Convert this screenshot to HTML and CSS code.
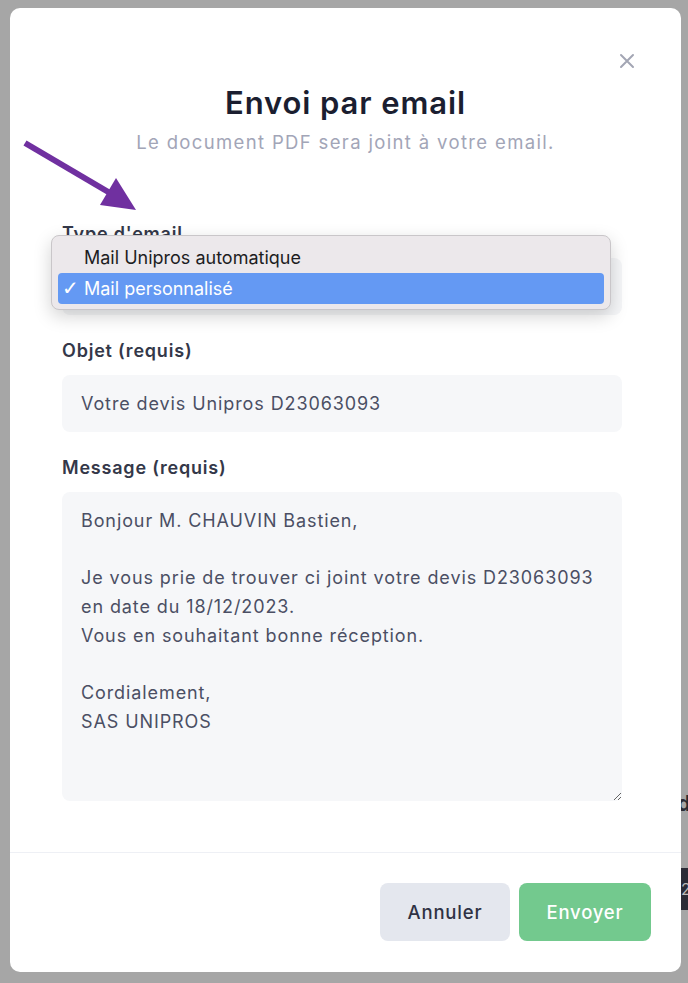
FILE: index.html
```html
<!DOCTYPE html>
<html lang="fr">
<head>
<meta charset="utf-8">
<title>Envoi par email</title>
<link rel="stylesheet" href="styles.css">
</head>
<body>
<div class="backdrop-edge"><span class="edge-d">d</span><span class="edge-block">2</span></div>
<div class="modal">
  <button class="close" aria-label="Fermer">
    <svg width="16" height="16" viewBox="0 0 16 16"><path d="M2 2 L14 14 M14 2 L2 14" stroke="#a3a6b4" stroke-width="2" stroke-linecap="round" fill="none"/></svg>
  </button>
  <header class="head">
    <h1 class="title">Envoi par email</h1>
    <p class="subtitle">Le document PDF sera joint à votre email.</p>
  </header>
  <div class="body">
    <div class="field">
      <label class="label">Type d'email</label>
      <div class="select"></div>
    </div>
    <div class="field">
      <label class="label">Objet (requis)</label>
      <div class="input">Votre devis Unipros D23063093</div>
    </div>
    <div class="field">
      <label class="label">Message (requis)</label>
      <textarea class="textarea">Bonjour M. CHAUVIN Bastien,

Je vous prie de trouver ci joint votre devis D23063093
en date du 18/12/2023.
Vous en souhaitant bonne réception.

Cordialement,
SAS UNIPROS</textarea>
    </div>
  </div>
  <footer class="foot">
    <button class="btn btn-cancel">Annuler</button>
    <button class="btn btn-send">Envoyer</button>
  </footer>
</div>

<div class="menu">
  <div class="menu-item">Mail Unipros automatique</div>
  <div class="menu-item menu-item-active"><span class="check">✓</span>Mail personnalisé</div>
</div>

<svg class="arrow" width="688" height="983" viewBox="0 0 688 983">
  <line x1="25" y1="143" x2="110" y2="193" stroke="#7030a0" stroke-width="6"/>
  <polygon points="136,210 100,205 116,178" fill="#7030a0"/>
</svg>
</body>
</html>
```

FILE: styles.css
```css
* { box-sizing: border-box; }
html, body { margin: 0; padding: 0; }
body {
  width: 688px;
  height: 983px;
  overflow: hidden;
  background: #a6a6a6;
  font-family: "Inter", "Noto Sans", sans-serif;
  position: relative;
  padding: 8px 7px 11px 10px;
}
.backdrop-edge { position: absolute; right: 0; top: 0; width: 7px; height: 983px; }
.edge-d { position: absolute; left: -4px; top: 790px; font: 700 22px "Inter", sans-serif; color: #2b2b33; }
.edge-block { position: absolute; left: 0; top: 868px; width: 7px; height: 42px; background: #2a2b36; color: #bbb; font: 16px "Inter", sans-serif; line-height: 42px; overflow: hidden; }

.modal {
  position: relative;
  width: 671px;
  height: 964px;
  background: #fff;
  border-radius: 10px;
  display: flex;
  flex-direction: column;
}
.close {
  position: absolute;
  top: 45px;
  left: 609px;
  border: 0;
  background: none;
  padding: 0;
  width: 16px;
  height: 16px;
}
.head {
  padding-top: 75px;
  text-align: center;
}
.title {
  margin: 0;
  font-size: 31px;
  line-height: 40px;
  font-weight: 600;
  color: #1b1e30;
  letter-spacing: 0.9px;
}
.subtitle {
  margin: 6px 0 0;
  font-size: 18.5px;
  line-height: 26px;
  color: #a2a5b7;
  letter-spacing: 1.35px;
}
.body {
  flex: 1;
  padding: 67px 59px 0 52px;
  display: flex;
  flex-direction: column;
  gap: 24px;
}
.field { display: flex; flex-direction: column; gap: 12px; }
.label {
  font-size: 18px;
  line-height: 24px;
  font-weight: 600;
  color: #343849;
  letter-spacing: 0.8px;
}
.select {
  height: 57px;
  background: #f5f6f8;
  border-radius: 8px;
}
.input {
  height: 57px;
  background: #f6f7f9;
  border-radius: 8px;
  padding: 0 19px;
  display: flex;
  align-items: center;
  font-size: 18px;
  color: #4b4f64;
  letter-spacing: 0.9px;
}
.textarea {
  height: 309px;
  background: #f6f7f9;
  border: 0;
  border-radius: 8px;
  padding: 15px 10px 15px 19px;
  font-family: inherit;
  font-size: 18px;
  line-height: 28.7px;
  color: #4b4f64;
  letter-spacing: 0.9px;
  resize: vertical;
  overflow: hidden;
  white-space: pre;
}
.foot {
  border-top: 1px solid #eef0f5;
  height: 120px;
  padding: 30px 30px 0 0;
  display: flex;
  justify-content: flex-end;
  align-items: flex-start;
  gap: 9px;
}
.btn {
  height: 58px;
  border: 0;
  border-radius: 8px;
  font-family: inherit;
  font-size: 18.5px;
  font-weight: 500;
  letter-spacing: 0.8px;
}
.btn-cancel { width: 130px; background: #e4e7ee; color: #2f3244; }
.btn-send { width: 132px; background: #73c98e; color: #fff; }

.menu {
  position: absolute;
  left: 51px;
  top: 235px;
  width: 560px;
  height: 75px;
  background: #ece8eb;
  border: 1px solid #c9c6c9;
  border-radius: 8px;
  box-shadow: 0 6px 18px rgba(0,0,0,0.18);
  padding: 6px 6px;
  font-family: "Inter", "Liberation Sans", sans-serif;
  font-size: 18px;
}
.menu-item {
  height: 31px;
  line-height: 31px;
  padding-left: 26px;
  color: #1d1d1f;
  border-radius: 4px;
  position: relative;
}
.menu-item-active {
  background: #6499f3;
  color: #fff;
}
.check { position: absolute; left: 4px; top: 0; font-size: 20px; font-family: "DejaVu Sans", sans-serif; }
.arrow { position: absolute; left: 0; top: 0; pointer-events: none; }
```
